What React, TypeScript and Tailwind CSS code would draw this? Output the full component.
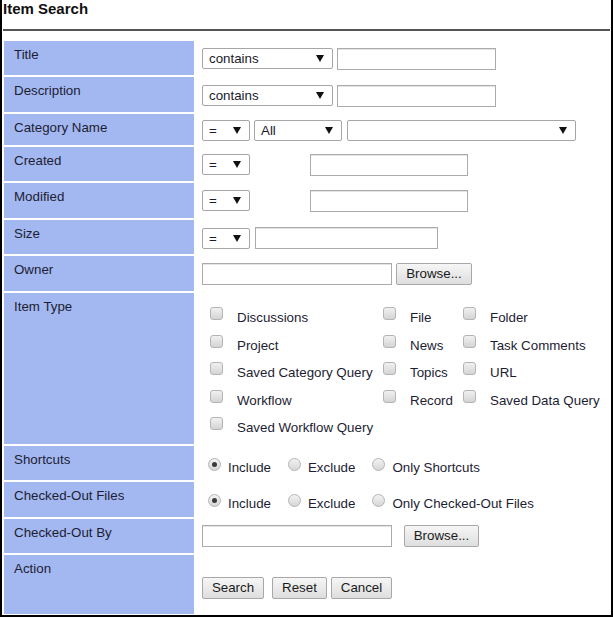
import React from 'react';

const font = "font-['Liberation_Sans',Arial,sans-serif]";

function Arrow() {
    return (
        <svg width="8" height="7" viewBox="0 0 8 7" className="shrink-0">
            <polygon points="0,0 8,0 4,7" fill="#111" />
        </svg>
    );
}

function Select({ w, text }: { w: string; text?: string }) {
    return (
        <div className={`${w} h-[21px] flex items-center justify-between pl-[6px] pr-[8px] border border-[#a6a6a6] rounded-[2px] bg-white text-[13.33px] text-[#1b1b2b]`}>
            <span>{text}</span>
            <Arrow />
        </div>
    );
}

function TextInput({ w }: { w: string }) {
    return <div className={`${w} h-[22px] border border-[#ababab] bg-white shadow-[inset_0_1px_0_#e4e4e4]`} />;
}

function Btn({ w, children }: { w: string; children: React.ReactNode }) {
    return (
        <div className={`${w} h-[22px] flex items-center justify-center border border-[#a8a8a8] rounded-[2px] bg-gradient-to-b from-[#f6f6f6] to-[#dedede] text-[13.33px] text-[#1b1b1b]`}>
            {children}
        </div>
    );
}

function Checkbox() {
    return <div className="w-[13px] h-[13px] shrink-0 rounded-[3px] border border-[#b4b4b4] bg-gradient-to-b from-[#f1f1f1] to-[#d4d4d4]" />;
}

function Radio({ checked }: { checked?: boolean }) {
    return (
        <div className="w-[13px] h-[13px] shrink-0 rounded-full border border-[#b4b4b4] bg-gradient-to-b from-[#f3f3f3] to-[#d6d6d6] flex items-center justify-center">
            {checked && <div className="w-[5px] h-[5px] rounded-full bg-[#3a3a3a]" />}
        </div>
    );
}

function Row({ label, h, children }: { label: string; h: string; children?: React.ReactNode }) {
    return (
        <div className={`flex ${h}`}>
            <div className="w-[190px] shrink-0 bg-[#a3b8f1] pl-[10px] pt-[6px] text-[13.33px] leading-[15px] text-[#1d1d33]">
                {label}
            </div>
            <div className="flex-1 ml-[2px] pl-[6px]">{children}</div>
        </div>
    );
}

const itemTypes: [string, string, string][] = [
    ['Discussions', 'File', 'Folder'],
    ['Project', 'News', 'Task Comments'],
    ['Saved Category Query', 'Topics', 'URL'],
    ['Workflow', 'Record', 'Saved Data Query'],
    ['Saved Workflow Query', '', ''],
];

function CheckCell({ label, w }: { label: string; w: string }) {
    if (!label) return <div className={w} />;
    return (
        <div className={`${w} flex items-start`}>
            <Checkbox />
            <span className="ml-[14px] mt-[3px] text-[13.33px] leading-[15px] text-[#1d1d33] whitespace-nowrap">{label}</span>
        </div>
    );
}

function RadioGroup({ options }: { options: { label: string; checked?: boolean; gap: string }[] }) {
    return (
        <div className="flex items-start pt-[12px] pl-[6px]">
            {options.map((o) => (
                <div key={o.label} className={`flex items-start ${o.gap}`}>
                    <Radio checked={o.checked} />
                    <span className="ml-[7px] mt-[2px] text-[13.33px] leading-[15px] text-[#1d1d33]">{o.label}</span>
                </div>
            ))}
        </div>
    );
}

export default function App() {
    return (
        <div className={`w-[613px] h-[617px] bg-white border-l-2 border-r-2 border-b-2 border-black ${font}`}>
            <div className="h-[29px] pl-[1px] text-[15px] leading-[18px] font-bold text-[#111]">Item Search</div>
            <div className="h-[2px] bg-[#555] ml-[1px] mr-[1px]" />

            <div className="mt-[10px] pl-[2px] flex flex-col gap-[2px]">
                <Row label="Title" h="h-[34px]">
                    <div className="flex gap-[4px] pt-[7px]">
                        <Select w="w-[131px]" text="contains" />
                        <TextInput w="w-[159px]" />
                    </div>
                </Row>
                <Row label="Description" h="h-[35px]">
                    <div className="flex gap-[4px] pt-[8px]">
                        <Select w="w-[131px]" text="contains" />
                        <TextInput w="w-[159px]" />
                    </div>
                </Row>
                <Row label="Category Name" h="h-[31px]">
                    <div className="flex pt-[6px]">
                        <Select w="w-[48px]" text="=" />
                        <div className="ml-[4px]"><Select w="w-[88px]" text="All" /></div>
                        <div className="ml-[5px]"><Select w="w-[229px]" /></div>
                    </div>
                </Row>
                <Row label="Created" h="h-[34px]">
                    <div className="flex items-start pt-[7px]">
                        <Select w="w-[48px]" text="=" />
                        <div className="ml-[60px]"><TextInput w="w-[158px]" /></div>
                    </div>
                </Row>
                <Row label="Modified" h="h-[35px]">
                    <div className="flex items-start pt-[7px]">
                        <Select w="w-[48px]" text="=" />
                        <div className="ml-[60px]"><TextInput w="w-[158px]" /></div>
                    </div>
                </Row>
                <Row label="Size" h="h-[34px]">
                    <div className="flex items-start pt-[7px]">
                        <div className="mt-[1px]"><Select w="w-[48px]" text="=" /></div>
                        <div className="ml-[5px]"><TextInput w="w-[183px]" /></div>
                    </div>
                </Row>
                <Row label="Owner" h="h-[35px]">
                    <div className="flex gap-[4px] pt-[7px]">
                        <TextInput w="w-[190px]" />
                        <Btn w="w-[76px]">Browse...</Btn>
                    </div>
                </Row>
                <Row label="Item Type" h="h-[151px]">
                    <div className="pt-[14px] pl-[8px] flex flex-col">
                        {itemTypes.map((r, i) => (
                            <div key={i} className="flex h-[27.5px]">
                                <CheckCell w="w-[173px]" label={r[0]} />
                                <CheckCell w="w-[80px]" label={r[1]} />
                                <CheckCell w="w-[130px]" label={r[2]} />
                            </div>
                        ))}
                    </div>
                </Row>
                <Row label="Shortcuts" h="h-[34px]">
                    <RadioGroup
                        options={[
                            { label: 'Include', checked: true, gap: 'mr-[17px]' },
                            { label: 'Exclude', gap: 'mr-[17px]' },
                            { label: 'Only Shortcuts', gap: '' },
                        ]}
                    />
                </Row>
                <Row label="Checked-Out Files" h="h-[35px]">
                    <RadioGroup
                        options={[
                            { label: 'Include', checked: true, gap: 'mr-[17px]' },
                            { label: 'Exclude', gap: 'mr-[17px]' },
                            { label: 'Only Checked-Out Files', gap: '' },
                        ]}
                    />
                </Row>
                <Row label="Checked-Out By" h="h-[34px]">
                    <div className="flex gap-[12px] pt-[6px]">
                        <TextInput w="w-[190px]" />
                        <Btn w="w-[75px]">Browse...</Btn>
                    </div>
                </Row>
                <Row label="Action" h="h-[59px]">
                    <div className="flex pt-[22px]">
                        <Btn w="w-[62px]">Search</Btn>
                        <div className="ml-[8px]"><Btn w="w-[55px]">Reset</Btn></div>
                        <div className="ml-[4px]"><Btn w="w-[61px]">Cancel</Btn></div>
                    </div>
                </Row>
            </div>
        </div>
    );
}
